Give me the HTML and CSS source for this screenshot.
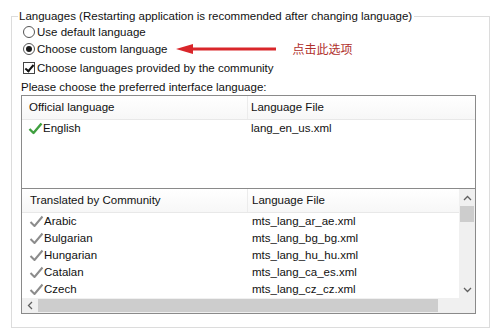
FILE: index.html
```html
<!DOCTYPE html>
<html>
<head>
<meta charset="utf-8">
<link rel="stylesheet" href="styles.css">
</head>
<body>
<fieldset class="group">
  <legend class="legend">Languages (Restarting application is recommended after changing language)</legend>
  <label class="opt"><input type="radio" name="l" class="radio"><span>Use default language</span></label>
  <div class="opt">
    <label class="opt-inner"><input type="radio" name="l" class="radio" checked><span>Choose custom language</span></label>
    <svg class="arrow" width="102" height="12" viewBox="0 0 102 12"><path d="M14 6 H100" stroke="#d9262a" stroke-width="3"/><path d="M0 6 L17 1 L17 11 Z" fill="#d9262a"/></svg>
    <span class="note">点击此选项</span>
  </div>
  <label class="opt opt-check"><input type="checkbox" class="check" checked><span>Choose languages provided by the community</span></label>
  <div class="hint">Please choose the preferred interface language:</div>

  <div class="list list-official">
    <div class="head">
      <div class="hcell c1">Official language</div>
      <div class="hcell c2">Language File</div>
    </div>
    <div class="row">
      <div class="cell c1"><svg class="tick" width="15" height="13" viewBox="0 0 15 13"><path d="M1.5 7 L5.5 11 L13.5 1.5" fill="none" stroke="#3f9f3f" stroke-width="2.4" stroke-linejoin="round"/></svg>English</div>
      <div class="cell c2">lang_en_us.xml</div>
    </div>
  </div>

  <div class="list list-comm">
    <div class="comm-body">
      <div class="head">
        <div class="hcell c1">Translated by Community</div>
        <div class="hcell c2">Language File</div>
      </div>
      <div class="row"><div class="cell c1"><svg class="tick" width="15" height="13" viewBox="0 0 15 13"><path d="M1.5 7 L5.5 11 L13.5 1.5" fill="none" stroke="#8c8c8c" stroke-width="2" stroke-linejoin="round"/></svg>Arabic</div><div class="cell c2">mts_lang_ar_ae.xml</div></div>
      <div class="row"><div class="cell c1"><svg class="tick" width="15" height="13" viewBox="0 0 15 13"><path d="M1.5 7 L5.5 11 L13.5 1.5" fill="none" stroke="#8c8c8c" stroke-width="2" stroke-linejoin="round"/></svg>Bulgarian</div><div class="cell c2">mts_lang_bg_bg.xml</div></div>
      <div class="row"><div class="cell c1"><svg class="tick" width="15" height="13" viewBox="0 0 15 13"><path d="M1.5 7 L5.5 11 L13.5 1.5" fill="none" stroke="#8c8c8c" stroke-width="2" stroke-linejoin="round"/></svg>Hungarian</div><div class="cell c2">mts_lang_hu_hu.xml</div></div>
      <div class="row"><div class="cell c1"><svg class="tick" width="15" height="13" viewBox="0 0 15 13"><path d="M1.5 7 L5.5 11 L13.5 1.5" fill="none" stroke="#8c8c8c" stroke-width="2" stroke-linejoin="round"/></svg>Catalan</div><div class="cell c2">mts_lang_ca_es.xml</div></div>
      <div class="row"><div class="cell c1"><svg class="tick" width="15" height="13" viewBox="0 0 15 13"><path d="M1.5 7 L5.5 11 L13.5 1.5" fill="none" stroke="#8c8c8c" stroke-width="2" stroke-linejoin="round"/></svg>Czech</div><div class="cell c2">mts_lang_cz_cz.xml</div></div>
    </div>
    <div class="vscroll">
      <div class="sbtn"><svg width="9" height="6" viewBox="0 0 9 6"><path d="M1 5 L4.5 1.5 L8 5" fill="none" stroke="#606060" stroke-width="1.3"/></svg></div>
      <div class="vthumb"></div>
      <div class="vtrack"></div>
      <div class="sbtn"><svg width="9" height="6" viewBox="0 0 9 6"><path d="M1 1 L4.5 4.5 L8 1" fill="none" stroke="#606060" stroke-width="1.3"/></svg></div>
    </div>
    <div class="hscroll">
      <div class="hbtn"><svg width="6" height="9" viewBox="0 0 6 9"><path d="M5 1 L1.5 4.5 L5 8" fill="none" stroke="#606060" stroke-width="1.3"/></svg></div>
      <div class="hthumb"></div>
      <div class="htrack"></div>
    </div>
    <div class="corner"></div>
  </div>
</fieldset>
</body>
</html>
```
FILE: styles.css
```css
html, body {
  margin: 0;
  padding: 0;
  background: #ffffff;
}
body {
  font-family: "Liberation Sans", Arial, sans-serif;
  font-size: 11.5px;
  color: #111;
}
.group {
  margin: 10px 10px 8px 11px;
  padding: 0 13px 0 11px;
  border: 1px solid #dcdcdc;
  height: 318px;
  box-sizing: border-box;
  display: flex;
  flex-direction: column;
}
.group > * {
  flex: none;
}
.legend {
  padding: 0 2px 0 1px;
  margin-left: -5px;
  line-height: 13px;
}
.opt {
  display: flex;
  align-items: center;
  height: 17px;
}
.opt-inner {
  display: flex;
  align-items: center;
}
.opt-check {
  margin-top: 2px;
}
.radio {
  appearance: none;
  -webkit-appearance: none;
  width: 12px;
  height: 12px;
  margin: 0 2px 0 0;
  border: 1px solid #555;
  border-radius: 50%;
  box-sizing: border-box;
  background: #fff;
  position: relative;
  flex: none;
}
.radio:checked::after {
  content: "";
  position: absolute;
  left: 2px;
  top: 2px;
  width: 6px;
  height: 6px;
  border-radius: 50%;
  background: #1a1a1a;
}
.check {
  appearance: none;
  -webkit-appearance: none;
  width: 12px;
  height: 12px;
  margin: 0 2px 0 0;
  border: 1px solid #444;
  box-sizing: border-box;
  background: #fff;
  position: relative;
  flex: none;
}
.check:checked::after {
  content: "";
  position: absolute;
  left: 3px;
  top: 0px;
  width: 3px;
  height: 7px;
  border: solid #111;
  border-width: 0 2px 2px 0;
  transform: rotate(40deg);
}
.arrow {
  margin-left: 9px;
  flex: none;
}
.note {
  margin-left: 14px;
  color: #b0302c;
  font-family: "Noto Sans CJK SC", sans-serif;
  font-size: 12px;
}
.hint {
  margin-top: 3px;
  height: 16px;
  line-height: 16px;
  margin-left: -2px;
}
.list {
  border: 1px solid #8a8a8a;
  margin-left: -2px;
  background: #fff;
}
.list-official {
  height: 94px;
  box-sizing: border-box;
}
.list-comm {
  border-top: none;
  height: 125px;
  box-sizing: border-box;
  display: grid;
  grid-template-columns: 1fr 16px;
  grid-template-rows: 109px 15px;
}
.comm-body {
  overflow: hidden;
}
.head {
  display: flex;
  height: 23px;
  border-bottom: 1px solid #e8e8e8;
  background: linear-gradient(#ffffff, #f7f7f7);
}
.hcell {
  line-height: 23px;
}
.hcell.c1 {
  border-right: 1px solid #ececec;
}
.row {
  display: flex;
  height: 17px;
  line-height: 17px;
}
.c1 {
  width: 226px;
  padding-left: 7px;
  box-sizing: border-box;
  flex: none;
  display: flex;
  align-items: center;
}
.c2 {
  padding-left: 3px;
}
.row .c1 {
  padding-left: 6px;
}
.list-comm .row .c1 {
  padding-left: 7px;
}
.list-comm .c2 {
  padding-left: 4px;
}
.list-comm .hcell.c1 {
  padding-left: 8px;
}
.tick {
  flex: none;
}
.vscroll {
  background: #f0f0f0;
  display: flex;
  flex-direction: column;
}
.sbtn {
  height: 17px;
  display: flex;
  align-items: center;
  justify-content: center;
  flex: none;
}
.vthumb {
  height: 16px;
  margin: 0 1px;
  background: #cdcdcd;
  flex: none;
}
.vtrack {
  flex: 1;
}
.hscroll {
  background: #f0f0f0;
  display: flex;
}
.hbtn {
  width: 16px;
  display: flex;
  align-items: center;
  justify-content: center;
  flex: none;
}
.hthumb {
  width: 400px;
  margin: 1px 0;
  background: #cdcdcd;
  flex: none;
}
.htrack {
  flex: 1;
}
.corner {
  background: #f0f0f0;
}
```
